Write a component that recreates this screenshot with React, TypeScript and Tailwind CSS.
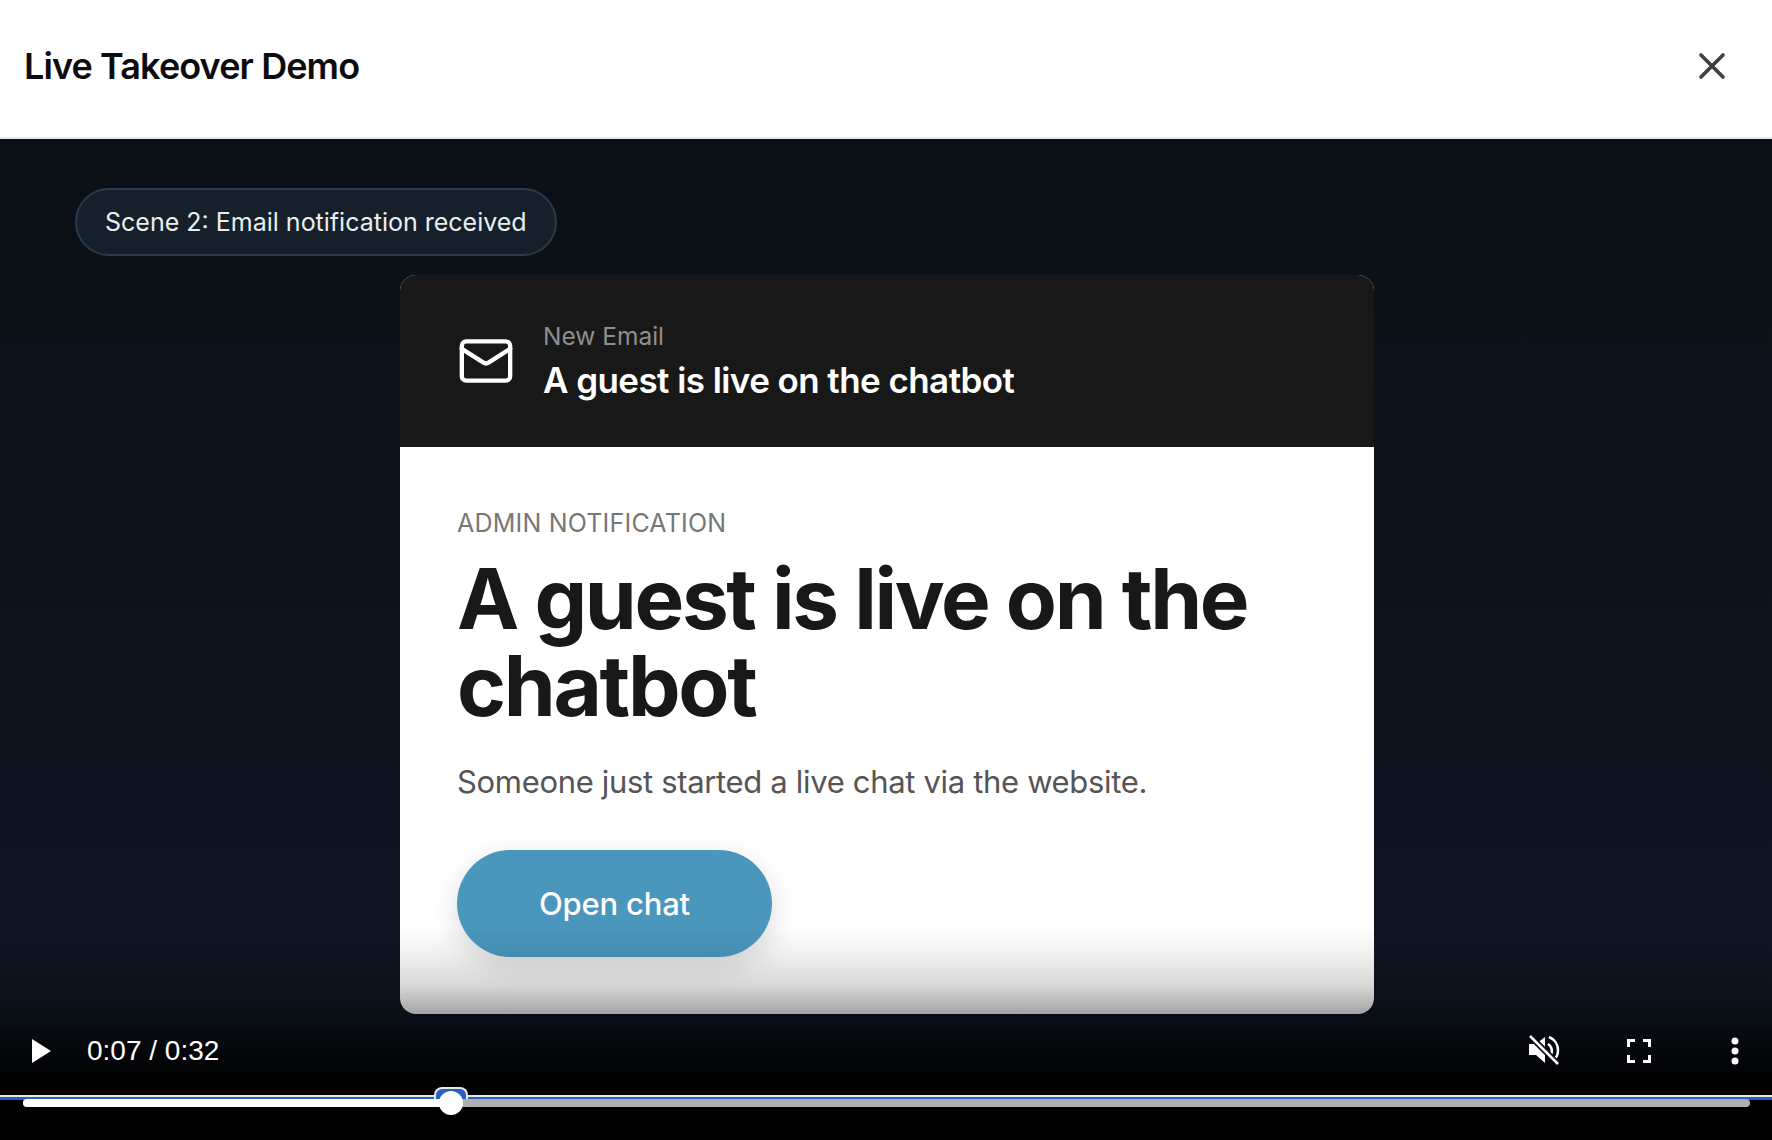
import { X } from 'lucide-react';

function MailIcon() {
  return (
    <svg width="58" height="58" viewBox="0 0 24 24" fill="none" stroke="currentColor" strokeWidth="1.8" strokeLinecap="round" strokeLinejoin="round" className="text-white shrink-0">
      <rect x="2" y="3.900" width="20" height="16.200" rx="1.800" />
      <path d="M22 7l-8.970 5.700a1.940 1.940 0 0 1-2.060 0L2 7" />
    </svg>
  );
}

function MuteIcon() {
  return (
    <svg width="32" height="32" viewBox="0 0 32 32" fill="none" className="text-white">
      <path d="M1 9h7l9-7v26l-9-8H1z" fill="currentColor" />
      <path d="M20 9a8 8 0 0 1 2 12" stroke="currentColor" strokeWidth="2.500" />
      <path d="M21 2a14 14 0 0 1 9 13 14 14 0 0 1-4 10" stroke="currentColor" strokeWidth="2.500" />
      <path d="M2 1l28 28" stroke="#05080e" strokeWidth="6" />
      <path d="M2 1l28 28" stroke="currentColor" strokeWidth="2.500" />
    </svg>
  );
}

function FullscreenIcon() {
  return (
    <svg width="24" height="24" viewBox="0 0 24 24" fill="none" stroke="white" strokeWidth="3">
      <path d="M1.500 8V1.500H8M16 1.500h6.500V8M22.500 16v6.500H16M8 22.500H1.500V16" />
    </svg>
  );
}

function KebabIcon() {
  return (
    <svg width="8" height="28" viewBox="0 0 8 28" fill="white">
      <circle cx="4" cy="4" r="3.500" />
      <circle cx="4" cy="14" r="3.500" />
      <circle cx="4" cy="24" r="3.500" />
    </svg>
  );
}

export default function App() {
  return (
    <div className="h-[1140px] flex flex-col bg-white overflow-hidden font-['Inter',sans-serif]">
      <header className="h-[139px] shrink-0 flex items-center justify-between pl-6 pr-[38px] pb-[6px] border-b-2 border-[#e5e7eb]">
        <h1 className="text-[36px] font-semibold text-[#0c0c0f] tracking-[-0.025em]">Live Takeover Demo</h1>
        <X size={44} strokeWidth={2} className="text-[#3f4046]" />
      </header>

      <main className="relative flex-1 bg-gradient-to-b from-[#0a1015] to-[#101725] overflow-hidden">
        <div className="ml-[75px] mt-[49px] w-fit h-[68px] flex items-center pt-[2px] px-[28px] rounded-full bg-[#15202a] border-2 border-[#2a3b49] text-[25px] text-[#eaeef1]">
          Scene 2: Email notification received
        </div>

        <div className="ml-[400px] mt-[19px] w-[974px] h-[739px] rounded-[16px] overflow-hidden bg-white">
          <div className="h-[172px] bg-[#181818] flex items-center gap-[28px] pl-[57px]">
            <MailIcon />
            <div className="flex flex-col pt-[3px]">
              <span className="text-[24.500px] leading-[32px] text-[#8e8e8e]">New Email</span>
              <span className="mt-[3px] text-[35px] leading-[50px] font-semibold tracking-[-0.570px] text-white">
                A guest is live on the chatbot
              </span>
            </div>
          </div>
          <div className="pt-[60px] px-[57px]">
            <div className="text-[25px] leading-[32px] tracking-[0.008em] text-[#777777]">ADMIN NOTIFICATION</div>
            <h2 className="mt-[16px] text-[83.500px] leading-[87px] font-bold tracking-[-0.028em] text-[#181818]">
              A guest is live on the chatbot
            </h2>
            <p className="mt-[33px] text-[31px] leading-[40px] tracking-[-0.330px] text-[#555555]">
              Someone just started a live chat via the website.
            </p>
            <button className="mt-[48px] w-[315px] h-[107px] pt-[2px] rounded-full bg-[#4a96bd] text-white text-[31px] font-medium tracking-[-0.2px] shadow-[0_10px_30px_rgba(0,0,0,0.15)]">
              Open chat
            </button>
          </div>
        </div>

        {/* native video controls sit on top of the frame */}
        <div className="absolute inset-x-0 top-[788px] bottom-0 bg-[linear-gradient(to_bottom,rgba(0,0,0,0)_0%,rgba(0,0,0,0.05)_11%,rgba(0,0,0,0.15)_27%,rgba(0,0,0,0.36)_41%,rgba(0,0,0,0.75)_60%,rgba(0,0,0,0.97)_78%,#000_100%)]" />
        <div className="absolute inset-x-0 bottom-0 h-[45px] bg-black" />

        <div className="absolute left-0 right-0 top-[897px] flex items-center h-[30px] pl-[32px] pr-[33px] text-white">
          <svg width="19" height="24" viewBox="0 0 19 24" fill="white">
            <path d="M0 0l19 12L0 24z" />
          </svg>
          <span className="ml-[36px] text-[28px] font-['Liberation_Sans',sans-serif]">0:07 / 0:32</span>
          <div className="ml-auto flex items-center">
            <MuteIcon />
            <div className="ml-[67px]"><FullscreenIcon /></div>
            <div className="ml-[80px]"><KebabIcon /></div>
          </div>
        </div>

        <div className="absolute inset-x-0 top-[956px] h-[2px] bg-[#e8e8e8]" />
        <div className="absolute inset-x-0 top-[958px] h-[2.500px] bg-[#2460c4]" />
        <div className="absolute left-[434px] top-[948px] w-[34px] h-[13px] rounded-t-[8px] bg-[#2460c4] border-2 border-b-0 border-[#e8e8e8]" />

        <div className="absolute left-[23px] top-[960px] w-[1727px] h-[8px] rounded-full bg-[#adb0ae] overflow-hidden">
          <div className="h-full w-[429px] bg-white" />
        </div>
        <div className="absolute left-[439px] top-[952px] w-[24px] h-[24px] rounded-full bg-white" />
      </main>
    </div>
  );
}
